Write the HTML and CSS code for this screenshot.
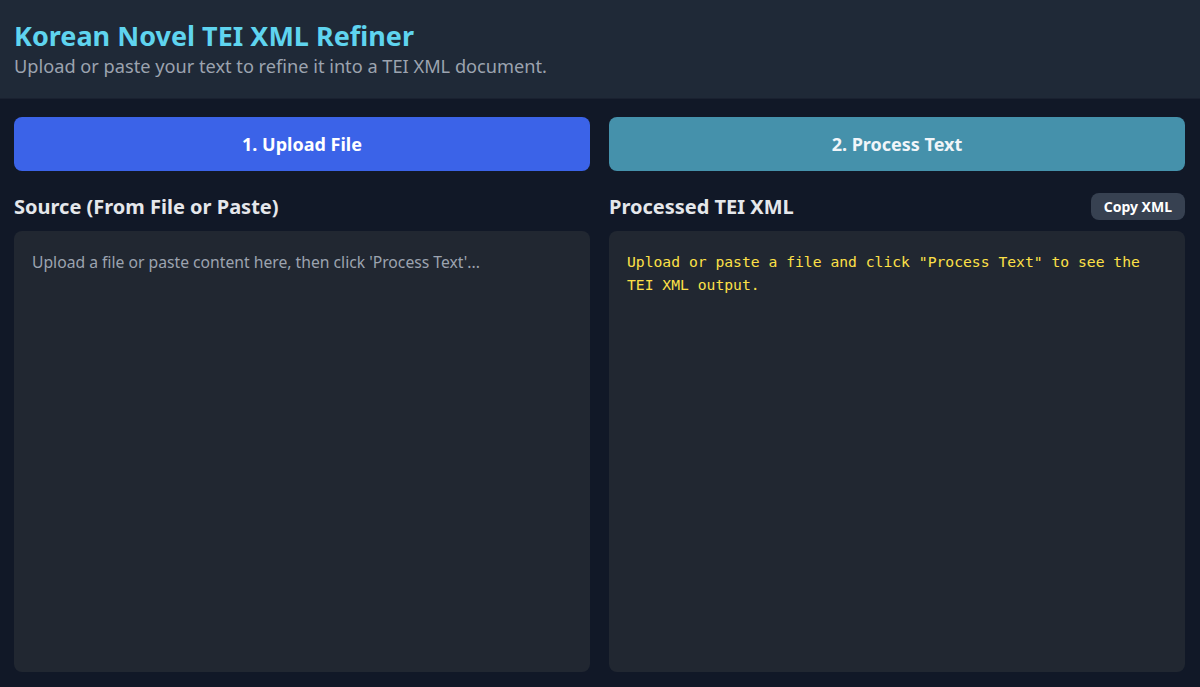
FILE: index.html
```html
<!DOCTYPE html>
<html lang="en">

<head>
    <meta charset="UTF-8">
    <meta name="viewport" content="width=device-width, initial-scale=1.0">
    <title>Korean Novel TEI XML Refiner</title>
    <link rel="stylesheet" href="styles.css">
</head>

<body>
    <header class="header">
        <h1>Korean Novel TEI XML Refiner</h1>
        <p>Upload or paste your text to refine it into a TEI XML document.</p>
    </header>

    <main class="main">
        <div class="actions">
            <button class="button button-upload">1. Upload File</button>
            <button class="button button-process">2. Process Text</button>
        </div>

        <div class="panes">
            <!-- Исходный текст -->
            <section class="pane">
                <div class="pane-head">
                    <h2>Source (From File or Paste)</h2>
                </div>
                <textarea class="source" placeholder="Upload a file or paste content here, then click 'Process Text'..."></textarea>
            </section>

            <!-- Результат -->
            <section class="pane">
                <div class="pane-head">
                    <h2>Processed TEI XML</h2>
                    <button class="copy-button">Copy XML</button>
                </div>
                <pre class="output">Upload or paste a file and click "Process Text" to see the TEI XML output.</pre>
            </section>
        </div>
    </main>
</body>

</html>
```

FILE: styles.css
```css
html,
body {
    height: 100%;
}

body {
    font-family: "Noto Sans", "Open Sans", sans-serif;
    background-color: #111827;
    color: #e5e7eb;
    margin: 0;
    padding: 0;
    display: flex;
    flex-direction: column;
}

.header {
    background-color: #1f2937;
    padding: 19px 14px 18px;
    border-bottom: 1px solid #1a2130;
}

.header h1 {
    margin: 0;
    font-size: 27px;
    line-height: 34px;
    font-weight: 700;
    color: #5fd4ef;
}

.header p {
    margin: 0;
    font-size: 18.2px;
    line-height: 27px;
    color: #9ca3af;
}

.main {
    flex: 1;
    display: flex;
    flex-direction: column;
    padding: 18px 15px 15px 14px;
    min-height: 0;
}

.actions {
    display: grid;
    grid-template-columns: 1fr 1fr;
    gap: 19px;
}

.button {
    height: 54px;
    border: none;
    border-radius: 8px;
    font-family: inherit;
    font-size: 18px;
    font-weight: 700;
    color: #ffffff;
}

.button-upload {
    background-color: #3b63e8;
}

.button-process {
    background-color: #4591ab;
    color: #f1f5f9;
}

.panes {
    flex: 1;
    display: grid;
    grid-template-columns: 1fr 1fr;
    gap: 19px;
    margin-top: 20px;
    min-height: 0;
}

.pane {
    display: flex;
    flex-direction: column;
    min-height: 0;
}

.pane-head {
    display: flex;
    align-items: center;
    justify-content: space-between;
    height: 30px;
    margin-bottom: 10px;
}

.pane-head h2 {
    margin: 0;
    font-size: 20px;
    font-weight: 700;
    color: #e5e7eb;
}

.copy-button {
    height: 27px;
    padding: 0 13px;
    border: none;
    border-radius: 8px;
    background-color: #374151;
    color: #ffffff;
    font-family: inherit;
    font-size: 14px;
    font-weight: 700;
}

.source,
.output {
    flex: 1;
    margin: 0;
    border: none;
    border-radius: 8px;
    background-color: #212731;
    padding: 20px 18px;
    box-sizing: border-box;
    resize: none;
    outline: none;
}

.source {
    font-family: inherit;
    font-size: 15.7px;
    line-height: 22px;
    color: #d1d5db;
}

.source::placeholder {
    color: #9ca3af;
}

.output {
    font-family: "DejaVu Sans Mono", "Liberation Mono", monospace;
    font-size: 14.7px;
    line-height: 23px;
    color: #fde047;
    white-space: pre-wrap;
    padding-top: 19px;
}
```
